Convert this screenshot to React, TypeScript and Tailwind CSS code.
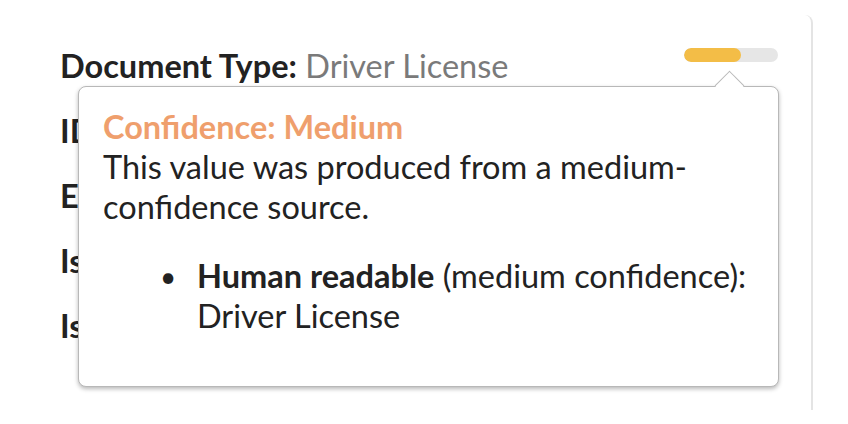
import React from "react";

const rows = [
  { label: "Document Type:", value: "Driver License", bar: true },
  { label: "ID Number:", value: "D1234567" },
  { label: "Expiration Date:", value: "01/01/2030" },
  { label: "Issue Date:", value: "01/01/2022" },
  { label: "Issuing State:", value: "California" },
];

export default function App() {
  return (
    <div
      className="w-[848px] h-[424px] bg-white relative overflow-hidden flex"
      style={{ fontFamily: "Lato, 'Open Sans', sans-serif" }}
    >
      <div className="flex-1 flex justify-end pt-[15px] pr-[35px] h-[410px]">
        <div className="w-full h-full border-r-2 border-t-0 border-[#e4e4e4] rounded-tr-[8px] pl-[60px] pr-[33px] pt-[31px]">
          <div className="flex flex-col gap-[25px]">
            {rows.map((r) => (
              <div key={r.label} className="flex items-center justify-between h-[40px]">
                <div className="text-[32.5px] leading-[40px] text-[#222] whitespace-nowrap">
                  <span className="font-bold">{r.label}</span>{" "}
                  <span className="text-[#7a7a7a]">{r.value}</span>
                </div>
                {r.bar && (
                  <div className="w-[94px] h-[14px] shrink-0 rounded-full bg-[#e6e6e6] mb-[22px] overflow-hidden">
                    <div className="w-[57px] h-full rounded-full bg-[#f3bd47]" />
                  </div>
                )}
              </div>
            ))}
          </div>
        </div>
      </div>

      <div className="absolute left-[78px] top-[86px] w-[701px] h-[301px] bg-white border border-[#b8b8b8] rounded-[8px] shadow-[0_2px_4px_rgba(0,0,0,0.28)] pl-[24px] pr-[20px] pt-[20px] text-[32.5px] leading-[40px] text-[#222]">
        <div className="absolute w-[21px] h-[21px] top-[-12px] left-[640px] rotate-45 bg-white border-l border-t border-[#b8b8b8]" />
        <div className="font-bold text-[#ef9f6d]">Confidence: Medium</div>
        <div>This value was produced from a medium-confidence source.</div>
        <ul className="pl-[57px] mt-[29px]">
          <li className="flex items-start">
            <span className="w-[37px] shrink-0 text-[28px]">•</span>
            <span>
              <span className="font-bold">Human readable</span> (medium confidence):
              <br />
              Driver License
            </span>
          </li>
        </ul>
      </div>
    </div>
  );
}
